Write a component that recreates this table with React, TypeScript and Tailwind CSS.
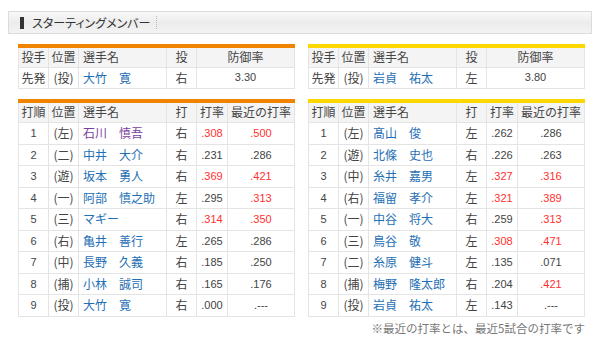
import { ReactNode } from "react"

type Batter = { no: number; pos: string; name: string; hand: string; avg: string; recent: string; visited?: boolean }

const giants: Batter[] = [
    { no: 1, pos: "左", name: "石川　慎吾", hand: "右", avg: ".308", recent: ".500", visited: true },
    { no: 2, pos: "二", name: "中井　大介", hand: "右", avg: ".231", recent: ".286" },
    { no: 3, pos: "遊", name: "坂本　勇人", hand: "右", avg: ".369", recent: ".421" },
    { no: 4, pos: "一", name: "阿部　慎之助", hand: "左", avg: ".295", recent: ".313" },
    { no: 5, pos: "三", name: "マギー", hand: "右", avg: ".314", recent: ".350" },
    { no: 6, pos: "右", name: "亀井　善行", hand: "左", avg: ".265", recent: ".286" },
    { no: 7, pos: "中", name: "長野　久義", hand: "右", avg: ".185", recent: ".250" },
    { no: 8, pos: "捕", name: "小林　誠司", hand: "右", avg: ".165", recent: ".176" },
    { no: 9, pos: "投", name: "大竹　寛", hand: "右", avg: ".000", recent: ".---" },
]

const tigers: Batter[] = [
    { no: 1, pos: "左", name: "髙山　俊", hand: "左", avg: ".262", recent: ".286" },
    { no: 2, pos: "遊", name: "北條　史也", hand: "右", avg: ".226", recent: ".263" },
    { no: 3, pos: "中", name: "糸井　嘉男", hand: "左", avg: ".327", recent: ".316" },
    { no: 4, pos: "右", name: "福留　孝介", hand: "左", avg: ".321", recent: ".389" },
    { no: 5, pos: "一", name: "中谷　将大", hand: "右", avg: ".259", recent: ".313" },
    { no: 6, pos: "三", name: "鳥谷　敬", hand: "左", avg: ".308", recent: ".471" },
    { no: 7, pos: "二", name: "糸原　健斗", hand: "左", avg: ".135", recent: ".071" },
    { no: 8, pos: "捕", name: "梅野　隆太郎", hand: "右", avg: ".204", recent: ".421" },
    { no: 9, pos: "投", name: "岩貞　祐太", hand: "左", avg: ".143", recent: ".---" },
]

// red when .300 or better
const hot = (v: string) => v !== ".---" && parseFloat(v) >= 0.3

function Th({ children, className = "" }: { children: ReactNode; className?: string }) {
    return <th className={`border border-[#e4e4e4] font-normal p-0 text-center ${className}`}>{children}</th>
}

function Td({ children, className = "" }: { children: ReactNode; className?: string }) {
    return <td className={`border border-[#e4e4e4] p-0 text-center ${className}`}>{children}</td>
}

function PitcherTable({ bar, name, hand, era }: { bar: string; name: string; hand: string; era: string }) {
    return (
        <table className={`w-[277px] table-fixed border-collapse border-t-4 ${bar} text-[12px] text-[#444]`}>
            <colgroup>
                <col className="w-[30px]" />
                <col className="w-[30px]" />
                <col className="w-[88px]" />
                <col className="w-[30px]" />
                <col />
            </colgroup>
            <thead>
                <tr className="h-[21px] bg-[#f4f4f4]">
                    <Th>投手</Th>
                    <Th>位置</Th>
                    <Th className="text-left pl-1">選手名</Th>
                    <Th>投</Th>
                    <Th>防御率</Th>
                </tr>
            </thead>
            <tbody>
                <tr className="h-[21px]">
                    <Td>先発</Td>
                    <Td>(投)</Td>
                    <Td className="text-left pl-1 text-[#1f70b5]">{name}</Td>
                    <Td>{hand}</Td>
                    <Td className="font-['Liberation_Sans',sans-serif] text-[11px]">{era}</Td>
                </tr>
            </tbody>
        </table>
    )
}

function BattingTable({ bar, rows }: { bar: string; rows: Batter[] }) {
    return (
        <table className={`w-[277px] table-fixed border-collapse border-t-4 ${bar} text-[12px] text-[#444]`}>
            <colgroup>
                <col className="w-[30px]" />
                <col className="w-[30px]" />
                <col className="w-[88px]" />
                <col className="w-[30px]" />
                <col className="w-[31px]" />
                <col />
            </colgroup>
            <thead>
                <tr className="h-[22px] bg-[#f4f4f4]">
                    <Th>打順</Th>
                    <Th>位置</Th>
                    <Th className="text-left pl-1">選手名</Th>
                    <Th>打</Th>
                    <Th>打率</Th>
                    <Th>最近の打率</Th>
                </tr>
            </thead>
            <tbody>
                {rows.map((r) => (
                    <tr key={r.no} className="h-[21.5px]">
                        <Td className="font-['Liberation_Sans',sans-serif] text-[11px]">{r.no}</Td>
                        <Td>({r.pos})</Td>
                        <Td className={`text-left pl-1 ${r.visited ? "text-[#7a3e9d]" : "text-[#1f70b5]"}`}>{r.name}</Td>
                        <Td>{r.hand}</Td>
                        <Td className={`font-['Liberation_Sans',sans-serif] text-[11px] ${hot(r.avg) ? "text-[#ff3030]" : ""}`}>{r.avg}</Td>
                        <Td className={`font-['Liberation_Sans',sans-serif] text-[11px] ${hot(r.recent) ? "text-[#ff3030]" : ""}`}>{r.recent}</Td>
                    </tr>
                ))}
            </tbody>
        </table>
    )
}

export default function App() {
    return (
        <div className="w-[600px] h-[356px] bg-white font-['Noto_Sans_CJK_JP',sans-serif] pt-[11px] px-2">
            <div className="flex items-center h-[23px] border border-[#dcdcdc] bg-gradient-to-b from-[#f9f9f9] via-[#ececec] to-[#f3f3f3]">
                <span className="ml-[11px] w-[4px] h-[12px] bg-[#333]" />
                <span className="ml-[8px] text-[12px] leading-none text-[#333] [font-feature-settings:'palt']">スターティングメンバー</span>
                <span className="ml-[6px] h-[13px] border-l border-dotted border-[#bbb]" />
            </div>

            <div className="flex gap-[13px] pl-[10px] mt-[10px]">
                <PitcherTable bar="border-t-[#f08300]" name="大竹　寛" hand="右" era="3.30" />
                <PitcherTable bar="border-t-[#ffd700]" name="岩貞　祐太" hand="左" era="3.80" />
            </div>

            <div className="flex gap-[13px] pl-[10px] mt-[10px]">
                <BattingTable bar="border-t-[#f08300]" rows={giants} />
                <BattingTable bar="border-t-[#ffd700]" rows={tigers} />
            </div>

            <p className="w-[577px] text-right text-[11.5px] text-[#777] mt-[1px] leading-[20px]">※最近の打率とは、最近5試合の打率です</p>
        </div>
    )
}
